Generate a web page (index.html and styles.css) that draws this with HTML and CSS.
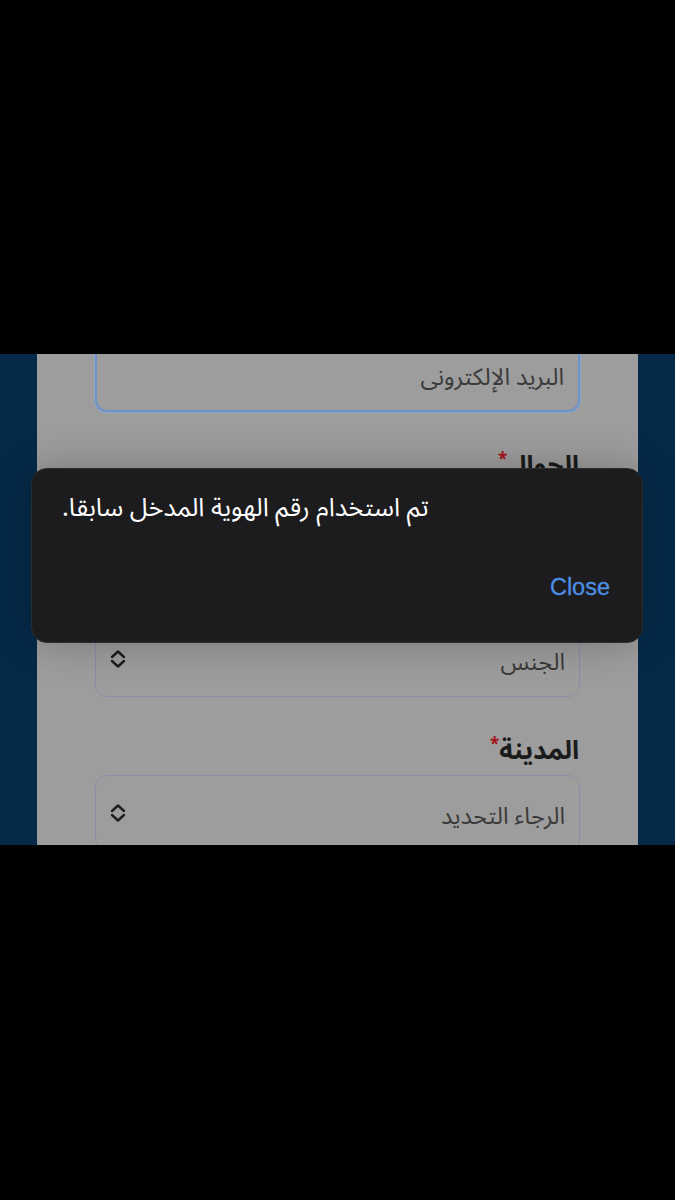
FILE: index.html
```html
<!DOCTYPE html>
<html lang="ar">
<head>
<meta charset="utf-8">
<link rel="stylesheet" href="styles.css">
</head>
<body>
<div class="band">
  <div class="side"></div>
  <div class="card">
    <div class="form" dir="rtl">
      <div class="field focused"><span class="ph">البريد الإلكترونى</span></div>
      <div class="label">الجوال<span class="req">*</span></div>
      <div class="field"><span class="ph">الجوال</span></div>
      <div class="label tight">الجنس<span class="req">*</span></div>
      <div class="field select">
        <span class="ph">الجنس</span>
        <svg class="chev" viewBox="0 0 18 20" width="18" height="20"><path d="M3 8 L9 2.5 L15 8 M3 12 L9 17.5 L15 12" fill="none" stroke="#1e1e1e" stroke-width="2.4" stroke-linecap="round" stroke-linejoin="round"/></svg>
      </div>
      <div class="label">المدينة<span class="req">*</span></div>
      <div class="field select">
        <span class="ph">الرجاء التحديد</span>
        <svg class="chev" viewBox="0 0 18 20" width="18" height="20"><path d="M3 8 L9 2.5 L15 8 M3 12 L9 17.5 L15 12" fill="none" stroke="#1e1e1e" stroke-width="2.4" stroke-linecap="round" stroke-linejoin="round"/></svg>
      </div>
    </div>
  </div>
  <div class="side"></div>
  <div class="dialog">
    <div class="msg" dir="rtl">تم استخدام رقم الهوية المدخل سابقا.</div>
    <div class="actions"><span class="close">Close</span></div>
  </div>
</div>
</body>
</html>
```

FILE: styles.css
```css
html, body {
  margin: 0;
  padding: 0;
  background: #000;
  width: 675px;
  height: 1200px;
  overflow: hidden;
}
.band {
  margin-top: 354px;
  height: 491px;
  position: relative;
  overflow: hidden;
  display: flex;
  background: #052a49;
}
.side {
  width: 37px;
  flex: none;
}
.card {
  flex: 1;
  background: #9d9d9d;
  padding: 0 58px;
  overflow: hidden;
}
.form {
  margin-top: -18px;
  display: flex;
  flex-direction: column;
  font-family: "Noto Sans Arabic", "DejaVu Sans", sans-serif;
}
.field {
  box-sizing: border-box;
  height: 76px;
  flex: none;
  border: 1.5px solid #8d8da6;
  border-radius: 12px;
  display: flex;
  align-items: center;
  justify-content: space-between;
  padding: 8px 14px 0 13px;
}
.field.focused {
  border: 2px solid #6f92c6;
  box-shadow: 0 0 0 1px #8aa6cf;
}
.ph {
  font-size: 23.5px;
  color: #3a3a3a;
  line-height: 30px;
}
.chev {
  margin-top: -8px;
}
.label {
  height: 30px;
  line-height: 30px;
  flex: none;
  font-size: 26px;
  font-weight: bold;
  color: #1b1b1b;
  margin: 33px 1px 15px 0;
}
.label.tight {
  margin-top: 10px;
}
.req {
  color: #a4141c;
  font-size: 17px;
  vertical-align: 9px;
}
.dialog {
  position: absolute;
  left: 31px;
  top: 114px;
  width: 612px;
  height: 175px;
  box-sizing: border-box;
  background: #1c1c1e;
  border: 1px solid #2c2c2e;
  border-radius: 16px;
  padding: 24px 32px 0 30px;
  box-shadow: 0 0 40px rgba(0, 0, 0, 0.25);
  display: flex;
  flex-direction: column;
  align-items: flex-start;
  z-index: 1;
}
.msg {
  font-family: "Noto Sans Arabic", "DejaVu Sans", sans-serif;
  font-size: 25.5px;
  line-height: 30px;
  color: #fff;
}
.actions {
  align-self: stretch;
  display: flex;
  justify-content: flex-end;
  margin-top: 49px;
}
.close {
  font-family: "Liberation Sans", Arial, sans-serif;
  font-size: 23.5px;
  line-height: 30px;
  color: #4c8fe3;
  -webkit-text-stroke: 0.3px #4c8fe3;
}
```
